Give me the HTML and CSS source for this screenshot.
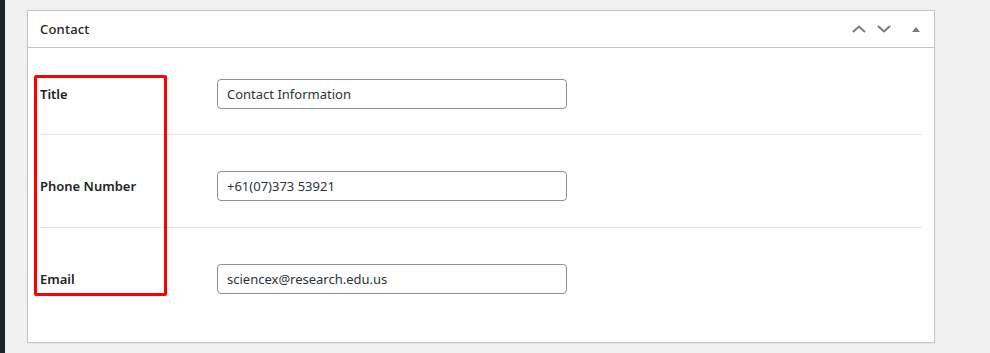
FILE: index.html
```html
<!DOCTYPE html>
<html lang="en">
<head>
  <meta charset="UTF-8">
  <meta name="viewport" content="width=device-width, initial-scale=1.0">
  <title>Contact</title>
  <link rel="stylesheet" href="styles.css">
</head>
<body>
  <div class="adminbar"></div>

  <div class="wrap">
    <div class="postbox">
      <div class="postbox-header">
        <h2>Contact</h2>
        <div class="handle-actions">
          <button class="handle" title="Move up">
            <svg width="14" height="8" viewBox="0 0 14 8"><polyline points="1,7 7,1.5 13,7" /></svg>
          </button>
          <button class="handle" title="Move down">
            <svg width="14" height="8" viewBox="0 0 14 8"><polyline points="1,1 7,6.5 13,1" /></svg>
          </button>
          <button class="handle toggle" title="Toggle panel">
            <svg width="8" height="5" viewBox="0 0 8 5"><polygon points="0,5 4,0 8,5" /></svg>
          </button>
        </div>
      </div>

      <div class="inside">
        <div class="field-row">
          <label for="title">Title</label>
          <input type="text" id="title" value="Contact Information">
        </div>
        <div class="field-row">
          <label for="phone">Phone Number</label>
          <input type="text" id="phone" value="+61(07)373 53921">
        </div>
        <div class="field-row">
          <label for="email">Email</label>
          <input type="text" id="email" value="sciencex@research.edu.us">
        </div>
      </div>

      <!-- highlight around the labels -->
      <div class="highlight"></div>
    </div>
  </div>
</body>
</html>
```

FILE: styles.css
```css
* {
  margin: 0;
  padding: 0;
  box-sizing: border-box;
  font-family: "Noto Sans", "Open Sans", sans-serif;
}

body {
  display: flex;
  min-height: 100vh;
  background-color: #f0f0f1;
  color: #1d2327;
}

.adminbar {
  width: 5px;
  background-color: #1d2327;
}

.wrap {
  padding: 10px 0 0 22px;
}

/* Postbox */
.postbox {
  position: relative;
  width: 908px;
  background-color: #fff;
  border: 1px solid #c3c4c7;
  box-shadow: 0 1px 1px rgba(0, 0, 0, 0.04);
}

.postbox-header {
  display: flex;
  align-items: center;
  justify-content: space-between;
  height: 37px;
  border-bottom: 1px solid #c3c4c7;
  padding-left: 12px;
}

.postbox-header h2 {
  font-size: 13px;
  font-weight: 500;
  color: #1d2327;
  letter-spacing: 0.2px;
}

.handle-actions {
  display: flex;
  align-items: center;
  padding-right: 14px;
}

.handle {
  display: flex;
  align-items: center;
  justify-content: center;
  background: none;
  border: none;
  cursor: pointer;
  margin-left: 11px;
}

.handle svg polyline {
  fill: none;
  stroke: #787c82;
  stroke-width: 2;
}

.handle svg polygon {
  fill: #787c82;
}

.handle.toggle {
  margin-left: 21px;
}

/* Fields */
.inside {
  padding: 0 12px;
}

.field-row {
  display: flex;
  align-items: center;
  padding: 36px 0 26px;
  border-bottom: 1px solid #e5e5e5;
}

.field-row:first-child {
  padding: 31px 0 25px;
}

.field-row:last-child {
  border-bottom: none;
  padding-bottom: 48px;
}

.field-row label {
  width: 177px;
  font-size: 13px;
  font-weight: 600;
  color: #1d2327;
}

.field-row input {
  width: 350px;
  height: 30px;
  padding: 0 9px;
  font-size: 13px;
  color: #2c3338;
  border: 1px solid #8c8f94;
  border-radius: 4px;
  background-color: #fff;
}

.highlight {
  position: absolute;
  left: 6px;
  top: 64px;
  width: 133px;
  height: 221px;
  border: 3px solid #ff0000;
  border-radius: 2px;
  pointer-events: none;
}
```
